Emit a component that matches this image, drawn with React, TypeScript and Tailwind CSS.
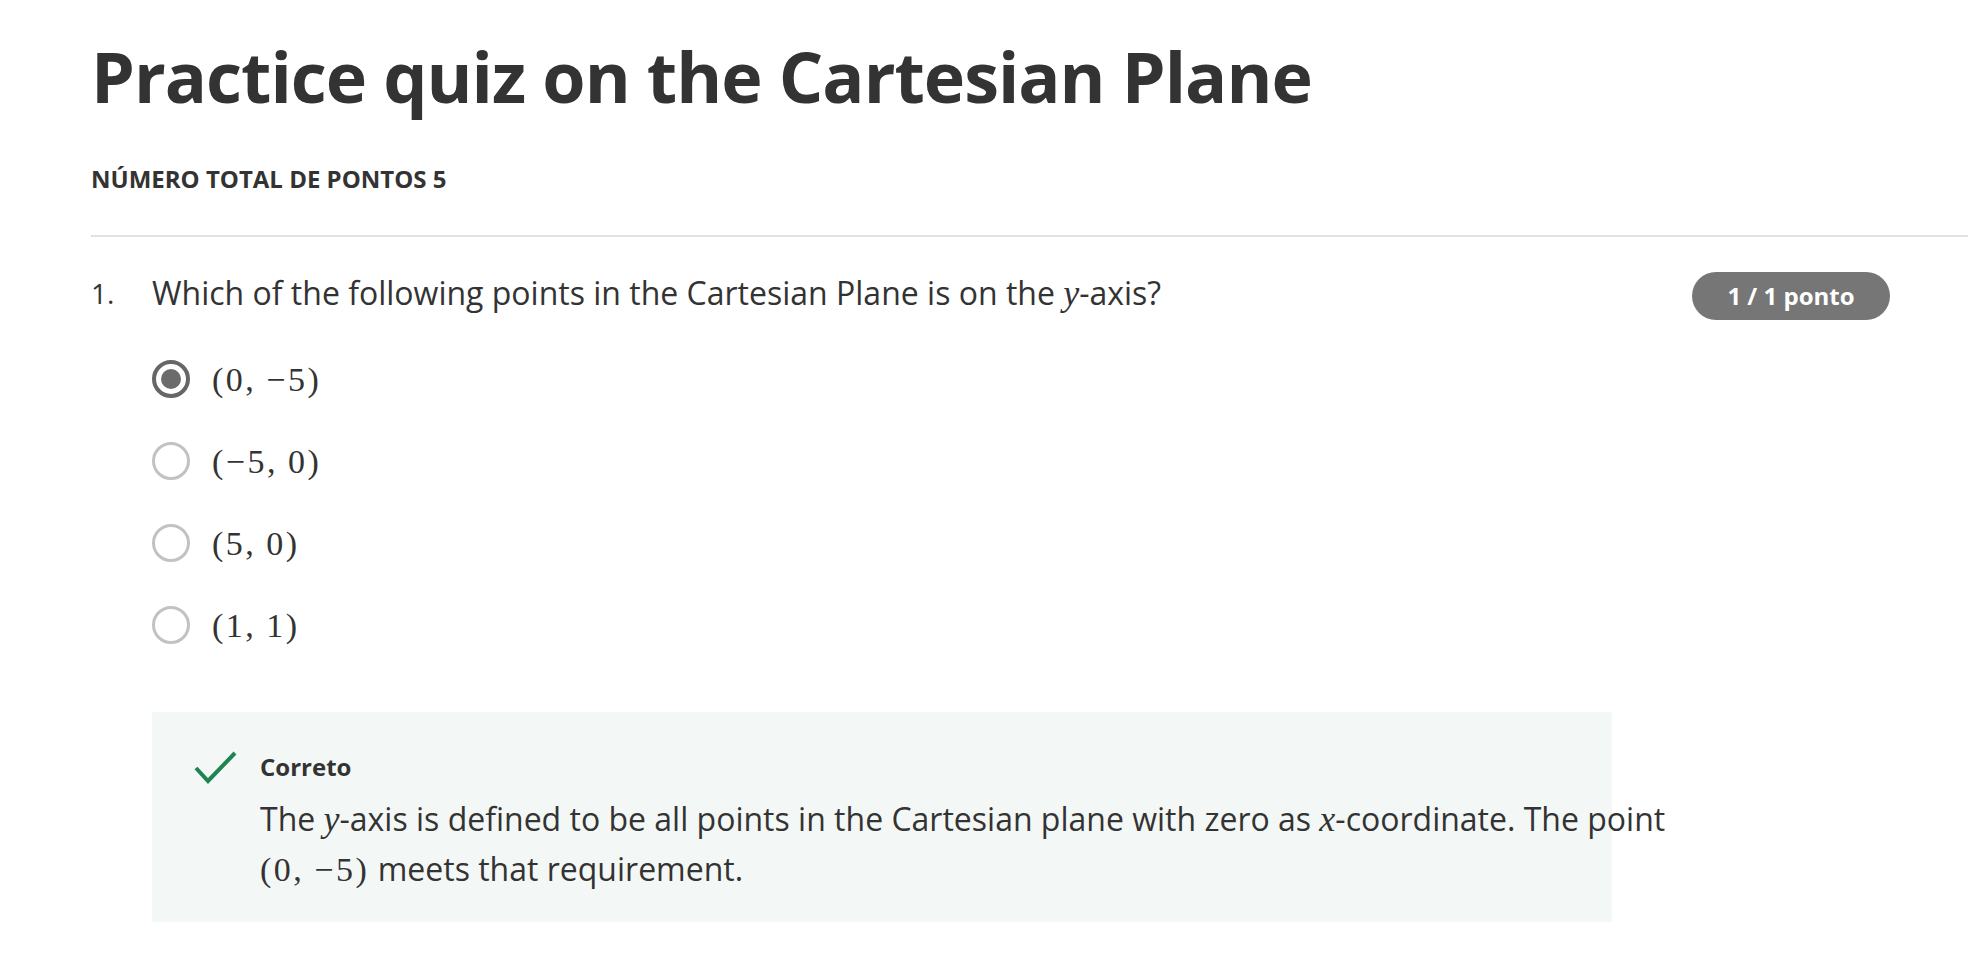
import React from "react";

const sans = { fontFamily: '"Open Sans", "Noto Sans", sans-serif' };

function Pair({ a, b }: { a: string; b: string }) {
  return (
    <span className="font-['Liberation_Serif',serif] text-[34px] tracking-[2.5px] whitespace-nowrap">
      ({a},<span className="inline-block w-[10px]" />
      {b})
    </span>
  );
}

function Radio({ checked }: { checked?: boolean }) {
  if (checked) {
    return (
      <span className="w-[38px] h-[38px] rounded-full border-[4px] border-[#666666] flex items-center justify-center shrink-0">
        <span className="w-[20px] h-[20px] rounded-full bg-[#6b6b6b]" />
      </span>
    );
  }
  return <span className="w-[38px] h-[38px] rounded-full border-[3px] border-[#c2c2c2] shrink-0" />;
}

export default function App() {
  const options: [string, string, boolean][] = [
    ["0", "\u22125", true],
    ["\u22125", "0", false],
    ["5", "0", false],
    ["1", "1", false],
  ];
  return (
    <div className="min-h-screen bg-white text-[#333333] pl-[91px] pt-[34px]" style={sans}>
      <h1 className="text-[70px] leading-[84px] font-bold tracking-[-1px] text-[#333333]">
        Practice quiz on the Cartesian Plane
      </h1>
      <div className="mt-[44px] text-[24px] leading-[33px] font-bold uppercase text-[#333333]">
        Número total de pontos 5
      </div>
      <div className="mt-[40px] h-[2px] bg-[#e1e1e1]" />

      <div className="mt-[32px] pr-[78px]">
        <div className="flex items-start">
          <div className="w-[61px] text-[28px] leading-[48px] shrink-0">1.</div>
          <div className="flex-1 text-[32px] leading-[48px]">
            Which of the following points in the Cartesian Plane is on the{" "}
            <span className="font-['Liberation_Serif',serif] italic text-[36px]">y</span>-axis?
          </div>
          <div className="mt-[3px] w-[198px] h-[48px] rounded-full bg-[#767676] text-white font-bold text-[24px] flex items-center justify-center shrink-0">
            1 / 1 ponto
          </div>
        </div>

        <div className="ml-[61px] mt-[18px] flex flex-col">
          {options.map(([a, b, c], i) => (
            <div key={i} className="h-[82px] flex items-center gap-[22px]">
              <Radio checked={c} />
              <Pair a={a} b={b} />
            </div>
          ))}
        </div>

        <div className="ml-[61px] mt-[46px] w-[1460px] h-[210px] bg-[#f3f8f6] pt-[39px] pl-[42px] flex gap-[22px]">
          <svg width="44" height="34" viewBox="0 0 44 34" className="shrink-0">
            <polyline
              points="2,17 14,30 41,2"
              fill="none"
              stroke="#1f8354"
              strokeWidth="4"
            />
          </svg>
          <div className="flex flex-col">
            <div className="text-[24px] leading-[30px] font-bold mt-[1px]">Correto</div>
            <div className="mt-[12px] text-[32px] leading-[50px] whitespace-nowrap">
              The <span className="font-['Liberation_Serif',serif] italic text-[36px]">y</span>-axis is
              defined to be all points in the Cartesian plane with zero as{" "}
              <span className="font-['Liberation_Serif',serif] italic text-[36px]">x</span>-coordinate. The
              point
              <br />
              <Pair a="0" b={"\u22125"} /> meets that requirement.
            </div>
          </div>
        </div>
      </div>
    </div>
  );
}
